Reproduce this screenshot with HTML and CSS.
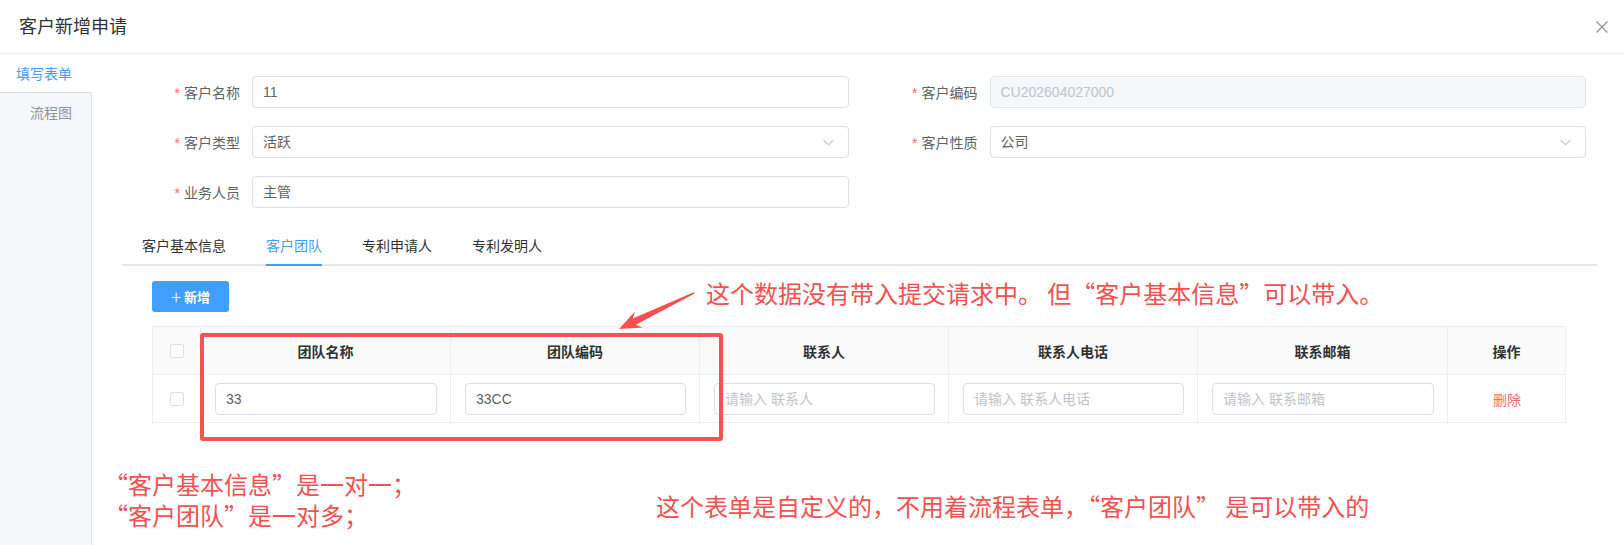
FILE: index.html
```html
<html>
<head>
    <link rel="stylesheet" href="styles.css">
</head>
<body>

<div class="dialog">

    <div class="dialog-header">
        <span class="dialog-title">客户新增申请</span>
        <span class="dialog-close">
            <svg width="12" height="12" viewBox="0 0 12 12"><path d="M0.5 0.5L11.5 11.5M11.5 0.5L0.5 11.5" stroke="#909399" stroke-width="1.2" fill="none"/></svg>
        </span>
    </div>

    <div class="dialog-body">

        <div class="side-tabs">
            <div class="side-tab active">填写表单</div>
            <div class="side-rest">
                <div class="side-tab">流程图</div>
            </div>
        </div>

        <div class="main">

            <div class="form-grid">
                <div class="form-item">
                    <label class="form-label"><i>*</i>客户名称</label>
                    <div class="input">11</div>
                </div>
                <div class="form-item">
                    <label class="form-label"><i>*</i>客户编码</label>
                    <div class="input disabled">CU202604027000</div>
                </div>
                <div class="form-item">
                    <label class="form-label"><i>*</i>客户类型</label>
                    <div class="input select">活跃
                        <svg class="arrow" width="11" height="7" viewBox="0 0 11 7"><path d="M0.5 0.8L5.5 5.8L10.5 0.8" stroke="#c0c4cc" stroke-width="1.1" fill="none"/></svg>
                    </div>
                </div>
                <div class="form-item">
                    <label class="form-label"><i>*</i>客户性质</label>
                    <div class="input select">公司
                        <svg class="arrow" width="11" height="7" viewBox="0 0 11 7"><path d="M0.5 0.8L5.5 5.8L10.5 0.8" stroke="#c0c4cc" stroke-width="1.1" fill="none"/></svg>
                    </div>
                </div>
                <div class="form-item">
                    <label class="form-label"><i>*</i>业务人员</label>
                    <div class="input">主管</div>
                </div>
            </div>

            <div class="tabs">
                <div class="tab">客户基本信息</div>
                <div class="tab active">客户团队</div>
                <div class="tab">专利申请人</div>
                <div class="tab">专利发明人</div>
            </div>

            <div class="toolbar">
                <button class="btn-primary"><span class="plus">+</span>新增</button>
            </div>

            <table class="grid">
                <colgroup>
                    <col style="width:48px">
                    <col style="width:250px">
                    <col style="width:249px">
                    <col style="width:249px">
                    <col style="width:249px">
                    <col style="width:250px">
                    <col>
                </colgroup>
                <thead>
                <tr>
                    <th><span class="checkbox"></span></th>
                    <th>团队名称</th>
                    <th>团队编码</th>
                    <th>联系人</th>
                    <th>联系人电话</th>
                    <th>联系邮箱</th>
                    <th>操作</th>
                </tr>
                </thead>
                <tbody>
                <tr>
                    <td><span class="checkbox"></span></td>
                    <td><div class="input">33</div></td>
                    <td><div class="input">33CC</div></td>
                    <td><div class="input placeholder">请输入 联系人</div></td>
                    <td><div class="input placeholder">请输入 联系人电话</div></td>
                    <td><div class="input placeholder">请输入 联系邮箱</div></td>
                    <td><span class="link-danger">删除</span></td>
                </tr>
                </tbody>
            </table>

        </div>
    </div>

    <!-- annotations drawn on top of the screenshot -->
    <div class="mark-box"></div>
    <svg class="mark-arrow" width="110" height="60" viewBox="0 0 110 60">
        <polygon points="19,49 42.7,47.6 35.8,44.8 94.3,13.7 93.7,12.3 32.8,38.4 34.9,31.4" fill="#f4504f"/>
    </svg>
    <div class="note note-top">这个数据没有带入提交请求中。 但“客户基本信息”可以带入。</div>
    <div class="note note-left">“客户基本信息”是一对一；</div>
    <div class="note note-left second">“客户团队”是一对多；</div>
    <div class="note note-right">这个表单是自定义的，不用着流程表单，“客户团队” 是可以带入的</div>

</div>

</body>
</html>
```

FILE: styles.css
```css
body{
    margin: 0;
    background: #fff;
    font-family: "Liberation Sans", "Noto Sans CJK SC", sans-serif;
    font-size: 14px;
    color: #606266;
}
.dialog{
    position: relative;
    width: 1624px;
    height: 545px;
    overflow: hidden;
    display: flex;
    flex-direction: column;
}
.dialog-header{
    height: 53px;
    border-bottom: 1px solid #ebeef5;
    display: flex;
    align-items: center;
    justify-content: space-between;
    padding: 0 16px 0 19px;
    flex-shrink: 0;
}
.dialog-title{
    font-size: 18px;
    color: #303133;
    line-height: 24px;
}
.dialog-close{
    display: flex;
    width: 12px;
    height: 12px;
}
.dialog-body{
    flex: 1;
    display: flex;
}

/* left vertical tabs */
.side-tabs{
    width: 92px;
    display: flex;
    flex-direction: column;
    flex-shrink: 0;
}
.side-tab{
    height: 40px;
    line-height: 40px;
    text-align: right;
    padding-right: 20px;
    color: #909399;
}
.side-tab.active{
    height: 38px;
    color: #409eff;
}
.side-rest{
    flex: 1;
    background: #f5f7fa;
    border-top: 1px solid #dcdfe6;
    border-right: 1px solid #dcdfe6;
}
.side-rest .side-tab{
    padding-right: 19px;
}

.main{
    flex: 1;
    padding: 22px 38px 0 60px;
}

/* form */
.form-grid{
    display: grid;
    grid-template-columns: 1fr 1fr;
    column-gap: 41px;
    row-gap: 18px;
}
.form-item{
    display: flex;
    align-items: center;
}
.form-label{
    width: 100px;
    padding-right: 12px;
    box-sizing: border-box;
    text-align: right;
    color: #606266;
    font-size: 14px;
}
.form-label i{
    font-style: normal;
    color: #f56c6c;
    margin-right: 4px;
}
.input{
    flex: 1;
    height: 32px;
    line-height: 30px;
    box-sizing: border-box;
    border: 1px solid #dcdfe6;
    border-radius: 4px;
    padding: 0 10px;
    color: #606266;
    font-size: 14px;
    position: relative;
    background: #fff;
}
.input.disabled{
    background: #f5f7fa;
    border-color: #e4e7ed;
    color: #c0c4cc;
}
.input .arrow{
    position: absolute;
    right: 14px;
    top: 12px;
}
.input.placeholder{
    color: #c0c4cc;
}

/* tabs */
.tabs{
    display: flex;
    margin: 18px -11px 0 -30px;
    border-bottom: 2px solid #e4e7ed;
    height: 38px;
}
.tab{
    padding: 0 20px;
    line-height: 40px;
    height: 40px;
    box-sizing: border-box;
    color: #303133;
    font-size: 14px;
}
.tab.active{
    color: #409eff;
    position: relative;
}
.tab.active::after{
    content: "";
    position: absolute;
    left: 20px;
    right: 20px;
    bottom: 0;
    height: 2px;
    background: #409eff;
}

.toolbar{
    margin-top: 15px;
}
.btn-primary{
    height: 31px;
    width: 77px;
    border: none;
    border-radius: 3px;
    background: #409eff;
    color: #fff;
    font-family: "Noto Sans CJK SC", sans-serif;
    font-size: 13px;
    font-weight: bold;
    display: flex;
    align-items: center;
    justify-content: center;
    gap: 3px;
    padding: 0;
}
.btn-primary .plus{
    font-size: 19px;
    font-weight: 300;
    line-height: 18px;
    margin-top: -2px;
}

/* table */
table.grid{
    margin-top: 14px;
    width: 1414px;
    border-collapse: collapse;
    table-layout: fixed;
    border: 1px solid #ebeef5;
}
table.grid th{
    height: 48px;
    background: #fafafa;
    color: #303133;
    font-weight: bold;
    font-size: 14px;
    border-right: 1px solid #ebeef5;
    border-bottom: 1px solid #ebeef5;
    text-align: center;
    padding: 0;
}
table.grid td{
    height: 48px;
    padding: 0 13px 0 14px;
    border-right: 1px solid #ebeef5;
    text-align: center;
}
table.grid td .input{
    text-align: left;
}
table.grid th:last-child,
table.grid td:last-child{
    border-right: none;
}
.checkbox{
    display: inline-block;
    width: 14px;
    height: 14px;
    box-sizing: border-box;
    border: 1px solid #dcdfe6;
    border-radius: 2px;
    background: #fff;
    vertical-align: middle;
}
table.grid td:first-child{
    padding: 0;
}
.link-danger{
    color: #f56c6c;
    font-size: 14px;
}

/* annotations */
.mark-box{
    position: absolute;
    left: 200px;
    top: 333px;
    width: 523px;
    height: 108px;
    box-sizing: border-box;
    border: 4px solid #f55353;
    border-radius: 3px;
}
.mark-arrow{
    position: absolute;
    left: 600px;
    top: 280px;
}
.note{
    position: absolute;
    font-family: "Noto Sans CJK SC", sans-serif;
    font-size: 24px;
    line-height: 31px;
    height: 31px;
    color: #f4504f;
    white-space: nowrap;
}
.note-top{
    left: 706px;
    top: 277px;
}
.note-left{
    left: 104px;
    top: 468px;
}
.note-left.second{
    top: 499px;
}
.note-right{
    left: 656px;
    top: 490px;
}
```
